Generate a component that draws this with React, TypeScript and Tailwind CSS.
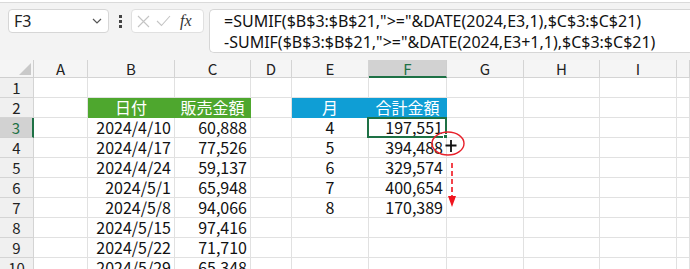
import React from "react";

const COLS = ["A", "B", "C", "D", "E", "F", "G", "H", "I", ""];

type Cell = { text?: string; fill?: "green" | "blue"; align?: "right" | "center" };

const data: Record<number, Record<string, Cell>> = {
  2: {
    B: { text: "日付", fill: "green", align: "center" },
    C: { text: "販売金額", fill: "green", align: "center" },
    E: { text: "月", fill: "blue", align: "center" },
    F: { text: "合計金額", fill: "blue", align: "center" },
  },
  3: { B: { text: "2024/4/10" }, C: { text: "60,888" }, E: { text: "4", align: "center" }, F: { text: "197,551" } },
  4: { B: { text: "2024/4/17" }, C: { text: "77,526" }, E: { text: "5", align: "center" }, F: { text: "394,488" } },
  5: { B: { text: "2024/4/24" }, C: { text: "59,137" }, E: { text: "6", align: "center" }, F: { text: "329,574" } },
  6: { B: { text: "2024/5/1" }, C: { text: "65,948" }, E: { text: "7", align: "center" }, F: { text: "400,654" } },
  7: { B: { text: "2024/5/8" }, C: { text: "94,066" }, E: { text: "8", align: "center" }, F: { text: "170,389" } },
  8: { B: { text: "2024/5/15" }, C: { text: "97,416" } },
  9: { B: { text: "2024/5/22" }, C: { text: "71,710" } },
  10: { B: { text: "2024/5/29" }, C: { text: "65,348" } },
};

function FormulaBar() {
  return (
    <div className="h-[60px] bg-[#f3f3f3] flex flex-col">
      <div className="h-[3px] bg-white border-b border-[#dadada]" />
      <div className="flex items-start pt-[6px] pl-[8px] gap-[5px]">
        <div className="w-[101px] h-[24px] bg-white border border-[#d6d6d6] rounded-[4px] flex items-center justify-between pl-[5px] pr-[6px]">
          <span className="text-[16px] text-[#222] font-['Noto_Sans',sans-serif]">F3</span>
          <svg width="10" height="6" viewBox="0 0 10 6">
            <path d="M1 1 L5 5 L9 1" fill="none" stroke="#555" strokeWidth="1.2" />
          </svg>
        </div>
        <div className="w-[12px] h-[24px] flex flex-col items-center justify-center gap-[2px]">
          <span className="w-[3px] h-[3px] bg-[#444]" />
          <span className="w-[3px] h-[3px] bg-[#444]" />
          <span className="w-[3px] h-[3px] bg-[#444]" />
        </div>
        <div className="w-[73px] h-[24px] bg-white border border-[#e0e0e0] rounded-[4px] flex items-center pl-[5px] gap-[6px]">
          <svg width="13" height="13" viewBox="0 0 13 13">
            <path d="M1 1 L12 12 M12 1 L1 12" stroke="#c4c4c4" strokeWidth="1.1" />
          </svg>
          <svg width="15" height="12" viewBox="0 0 15 12">
            <path d="M1 6 L5.5 10.5 L14 1" fill="none" stroke="#c4c4c4" strokeWidth="1.1" />
          </svg>
          <span className="text-[16px] italic text-[#333] font-['Liberation_Serif',serif] ml-[3px] leading-none">fx</span>
        </div>
        <div className="flex-1 h-[44px] bg-white border border-[#d6d6d6] rounded-l-[5px] border-r-0 pl-[14px] pt-[1px] text-[16px] leading-[21px] text-[#111] font-['Noto_Sans',sans-serif]">
          <div>=SUMIF($B$3:$B$21,"&gt;="&amp;DATE(2024,E3,1),$C$3:$C$21)</div>
          <div>-SUMIF($B$3:$B$21,"&gt;="&amp;DATE(2024,E3+1,1),$C$3:$C$21)</div>
        </div>
      </div>
    </div>
  );
}

function Sheet() {
  const rows = [1, 2, 3, 4, 5, 6, 7, 8, 9, 10];
  return (
    <div className="grid grid-cols-[34px_54px_87px_76px_41px_77px_78px_77px_76px_77px_1fr] font-['Noto_Sans_CJK_JP',sans-serif] text-[16px] text-[#111]">
      {/* corner */}
      <div className="h-[18px] bg-[#f5f5f5] border-r border-b border-[#cfcfcf] flex items-end justify-end p-[2px]">
        <svg width="12" height="12" viewBox="0 0 12 12">
          <path d="M12 0 L12 12 L0 12 Z" fill="#c9c9c9" />
        </svg>
      </div>
      {COLS.map((c) =>
        c === "F" ? (
          <div key={c} className="h-[18px] bg-[#d2d2d2] border-r border-[#cfcfcf] border-b-2 border-b-[#1e7145] flex items-center justify-center text-[15px] text-[#1e7145] leading-none">
            {c}
          </div>
        ) : (
          <div key={c} className="h-[18px] bg-[#f5f5f5] border-r border-b border-[#d4d4d4] flex items-center justify-center text-[15px] text-[#222] leading-none">
            {c}
          </div>
        )
      )}
      {rows.map((r) => (
        <React.Fragment key={r}>
          {r === 3 ? (
            <div className="h-[20px] bg-[#d2d2d2] border-b border-[#cfcfcf] border-r-2 border-r-[#1e7145] flex items-center justify-center text-[15px] text-[#1e7145] leading-none">
              {r}
            </div>
          ) : (
            <div className="h-[20px] bg-[#f0f0f0] border-r border-b border-[#d4d4d4] flex items-center justify-center text-[15px] text-[#222] leading-none">
              {r}
            </div>
          )}
          {COLS.map((c) => {
            const cell = data[r]?.[c];
            const fill =
              cell?.fill === "green"
                ? "bg-[#4ea72e] border-[#4ea72e] text-white"
                : cell?.fill === "blue"
                ? "bg-[#0f9ed5] border-[#0f9ed5] text-white"
                : "bg-white border-[#e1e1e1]";
            const align = cell?.align === "center" ? "justify-center" : "justify-end pr-[3px]";
            const selected = r === 3 && c === "F";
            return (
              <div
                key={c}
                className={`relative h-[20px] border-r border-b ${fill} flex items-center leading-[19px] whitespace-nowrap ${align}`}
              >
                {cell?.text}
                {selected && (
                  <>
                    <div className="absolute left-[-2px] top-[-1px] right-[-1px] bottom-[-1px] border-2 border-[#1e7145] pointer-events-none" />
                    <div className="absolute right-[-3px] bottom-[-3px] w-[5px] h-[5px] bg-[#1e7145] outline outline-1 outline-white" />
                  </>
                )}
              </div>
            );
          })}
        </React.Fragment>
      ))}
    </div>
  );
}

export default function App() {
  return (
    <div className="relative w-[690px] h-[269px] overflow-hidden bg-white">
      <FormulaBar />
      <Sheet />
      {/* fill-handle cursor callout */}
      <svg className="absolute left-[428px] top-[128px]" width="40" height="84" viewBox="0 0 40 84">
        <ellipse cx="20" cy="15.5" rx="16" ry="11.5" fill="none" stroke="#e8202a" strokeWidth="1.4" />
        <path d="M23 12 L23 24 M17.5 17.5 L28.5 17.5" stroke="#111" strokeWidth="1.8" />
        <path d="M24 35 L24 70" stroke="#f0141e" strokeWidth="1.6" strokeDasharray="5 3" />
        <path d="M20 68 L28 68 L24 79 Z" fill="#f0141e" />
      </svg>
    </div>
  );
}
